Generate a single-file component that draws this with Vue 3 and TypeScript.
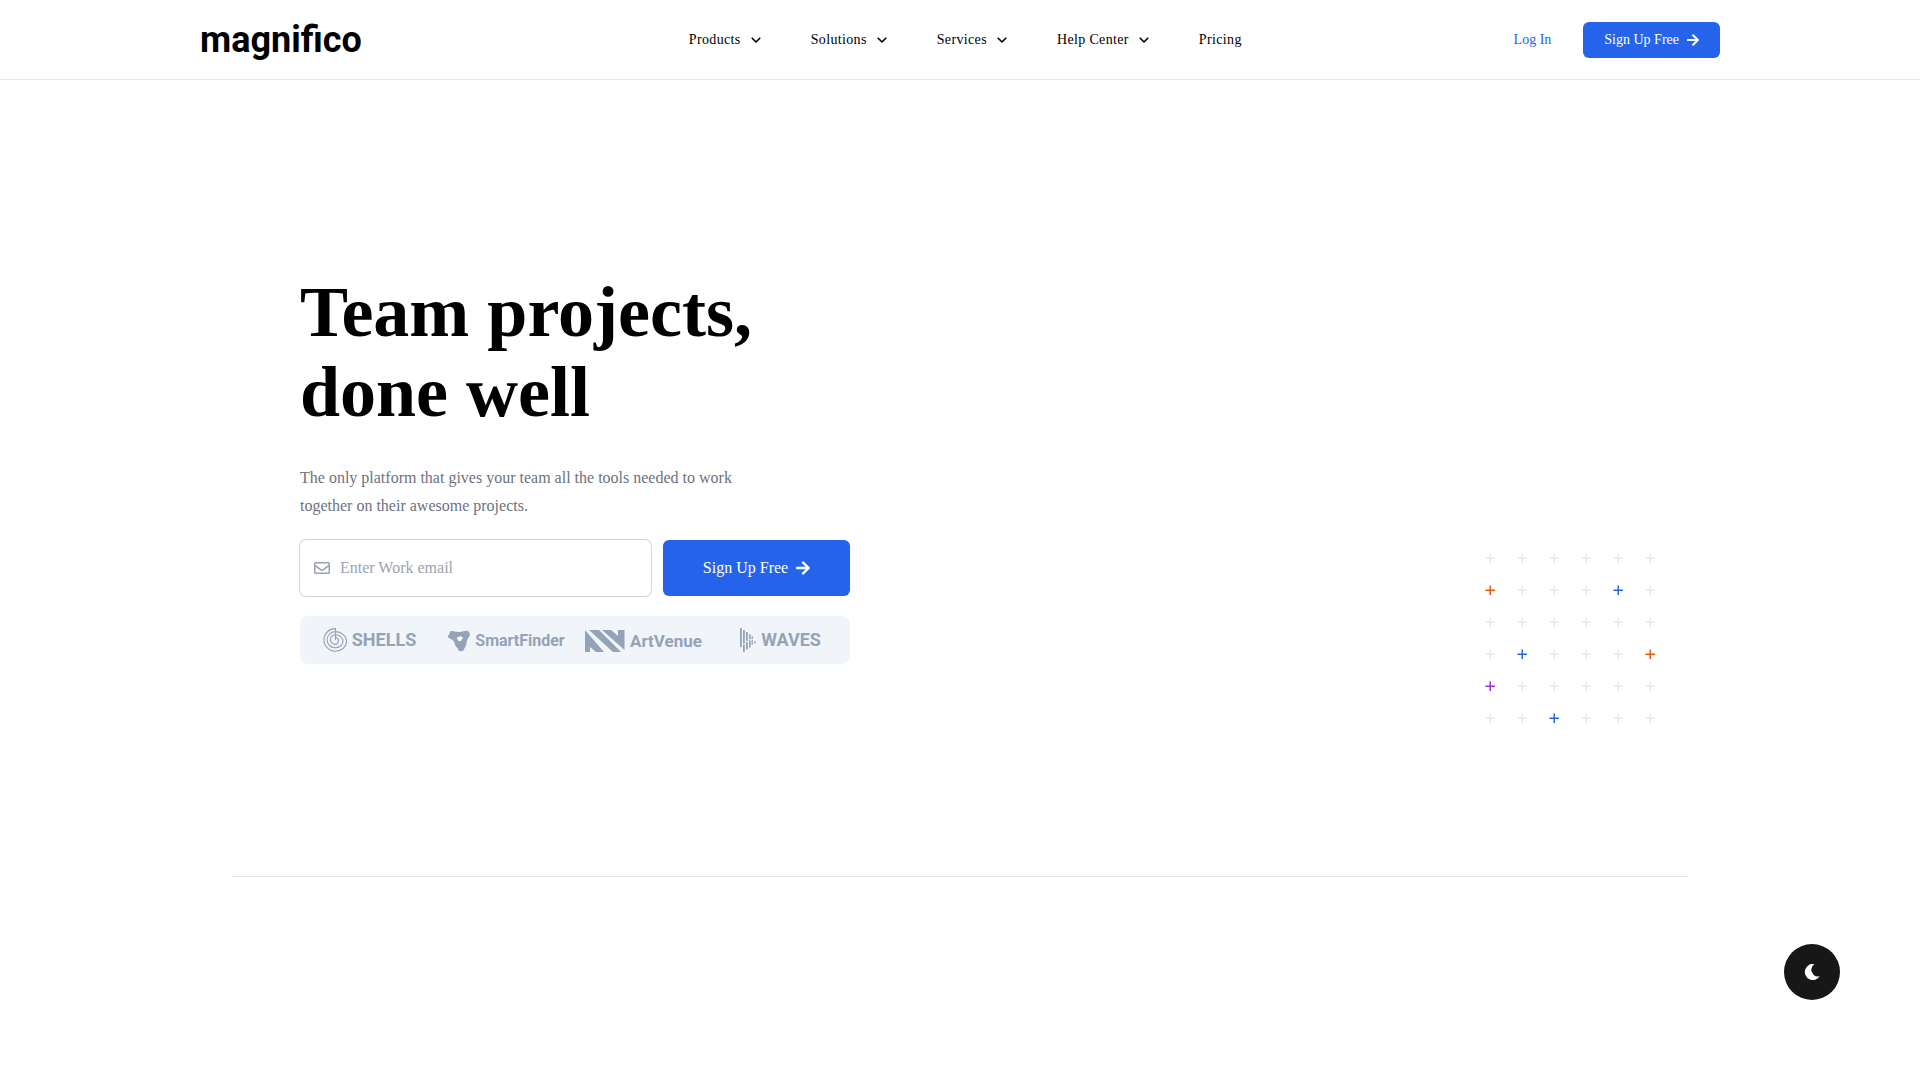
<script setup lang="ts">
import { ref } from 'vue'

interface NavItem {
  label: string
  menu: boolean
}

const navItems: NavItem[] = [
  { label: 'Products', menu: true },
  { label: 'Solutions', menu: true },
  { label: 'Services', menu: true },
  { label: 'Help Center', menu: true },
  { label: 'Pricing', menu: false },
]

const email = ref('')

// Accent colours by cell index in the 6 × 6 plus pattern
const accents: Record<number, string> = {
  6: 'orange',
  10: 'blue',
  19: 'blue',
  23: 'orange',
  24: 'purple',
  32: 'blue',
}
const cells: string[] = Array.from({ length: 36 }, (_, i) => accents[i] ?? 'plain')

const arrowPath =
  'M190.5 66.9l22.2-22.2c9.4-9.4 24.6-9.4 33.9 0L441 239c9.4 9.4 9.4 24.6 0 33.9L246.6 467.3c-9.4 9.4-24.6 9.4-33.9 0l-22.2-22.2c-9.5-9.5-9.3-25 .4-34.3L311.4 296H24c-13.3 0-24-10.7-24-24v-32c0-13.3 10.7-24 24-24h287.4L190.9 101.2c-9.8-9.3-10-24.8-.4-34.3z'
</script>

<template>
  <div class="page">
    <header class="header">
      <div class="header-inner">
        <a href="#" class="brand">magnifico</a>
        <nav class="nav" aria-label="Main">
          <template v-for="item in navItems" :key="item.label">
            <button v-if="item.menu" type="button" class="nav-item">
              {{ item.label }}
              <svg class="chevron" viewBox="0 0 18 18" fill="none" stroke="currentColor" stroke-width="1.6" stroke-linecap="round" stroke-linejoin="round" aria-hidden="true">
                <path d="M5.200 7.200L9 11L12.800 7.200" />
              </svg>
            </button>
            <a v-else href="#" class="nav-item">{{ item.label }}</a>
          </template>
        </nav>
        <div class="actions">
          <a href="#" class="login">Log In</a>
          <button type="button" class="btn btn-small">
            Sign Up Free
            <svg viewBox="0 0 448 512" fill="currentColor" aria-hidden="true">
              <path :d="arrowPath" />
            </svg>
          </button>
        </div>
      </div>
    </header>

    <main class="hero">
      <section class="intro">
        <h1>Team projects,<br />done well</h1>
        <p>The only platform that gives your team all the tools needed to work together on their awesome projects.</p>
        <form class="signup" @submit.prevent>
          <label class="field">
            <svg viewBox="0 0 512 512" fill="currentColor" aria-hidden="true">
              <path d="M464 64H48C21.49 64 0 85.49 0 112v288c0 26.51 21.49 48 48 48h416c26.51 0 48-21.49 48-48V112c0-26.51-21.49-48-48-48zm0 48v40.805c-22.422 18.259-58.168 46.651-134.587 106.49-16.841 13.247-50.201 45.072-73.413 44.701-23.208.375-56.579-31.459-73.413-44.701C106.18 199.465 70.425 171.067 48 152.805V112h416zM48 400V214.398c22.914 18.251 55.409 43.862 104.938 82.646 21.857 17.205 60.134 55.186 103.062 54.955 42.717.231 80.509-37.199 103.053-54.947 49.528-38.783 82.032-64.401 104.947-82.653V400H48z" />
            </svg>
            <input v-model="email" type="email" placeholder="Enter Work email" aria-label="Work email" />
          </label>
          <button type="submit" class="btn btn-large">
            Sign Up Free
            <svg viewBox="0 0 448 512" fill="currentColor" aria-hidden="true">
              <path :d="arrowPath" />
            </svg>
          </button>
        </form>
        <div class="clients">
          <div class="client">
            <svg width="24" height="24" viewBox="0 0 24 24" fill="none" stroke="currentColor" stroke-width="1.1" aria-hidden="true">
              <path d="M12.500 12V.6A11.300 11.300 0 0 0 12 23.200A11.300 9.800 0 0 0 12.500 3.600A8.100 8.100 0 0 0 12 19.800A7.700 6.500 0 0 0 12.500 6.800A4.800 4.800 0 0 0 12 16.400A4 3.700 0 0 0 12.500 9.200" />
            </svg>
            <span class="client-name">SHELLS</span>
          </div>
          <div class="client lowered">
            <svg width="22" height="22" viewBox="0 0 22 22" fill="currentColor" aria-hidden="true">
              <path d="M2.5 1.2C5 .2 6.300 2 11 1.900C15.500 1.800 16.500 .2 19.500 .8C22.300 2 22.600 5.500 20.400 7.800C18.300 10.500 19 12 18.200 14.500C17.400 17 16.600 17.500 16 19.500C15.300 21.700 11 22 10.300 19.700C9.700 17.500 7.500 16.500 6.800 14C6.200 11.500 5.500 10 3.200 9.200C-.5 8 -.8 6 1 4.500C2 3.500 1.300 2.300 2.500 1.200Z" />
              <path class="shine" d="M9.500 7.200C8.700 7.800 9.100 8.800 10 10.300C10.700 11.500 12 11.700 13 10.700C14.400 9.200 15.200 8 14.300 7.100C13.200 6.400 11 6.500 9.500 7.200Z" />
            </svg>
            <span class="client-name medium">SmartFinder</span>
          </div>
          <div class="client lowered">
            <svg width="40" height="22" viewBox="0 0 40 22" fill="currentColor" aria-hidden="true">
              <path d="M0 0V22H5V17L11 22H19ZM4 0L28 22H36L14 0ZM17 0L39.500 20V0H33V6L26 0Z" />
            </svg>
            <span class="client-name compact">ArtVenue</span>
          </div>
          <div class="client">
            <svg width="16" height="24" viewBox="0 0 16 24" fill="currentColor" aria-hidden="true">
              <path d="M0 0h1.800v19H0zM3 2h1.800v13.500H3zM3 16.500h1.800V24H3zM6 4h1.800v9H6zM6 14h1.800v7.500H6zM9 6.300h1.600v5H9zM9 12.300h1.600v7.200H9zM11.500 8.200h1.400v3H11.500zM11.500 12.300h1.400v4.500H11.500zM14.200 13.500h1.600v2h-1.600z" />
            </svg>
            <span class="client-name">WAVES</span>
          </div>
        </div>
      </section>

      <div class="pattern" aria-hidden="true">
        <svg v-for="(tone, i) in cells" :key="i" :class="tone" viewBox="0 0 10 10" fill="currentColor">
          <path d="M4.500 .5H6V10H4.500ZM.5 4.500H10V6H.5Z" />
        </svg>
      </div>
    </main>

    <button type="button" class="theme" aria-label="Toggle dark mode">
      <svg width="16" height="16" viewBox="-1 0 16 16" fill="currentColor" aria-hidden="true">
        <path d="M9.500 0A8.100 8.100 0 1 0 14.800 12.300A6.800 6.800 0 0 1 9.500 0Z" />
      </svg>
    </button>
  </div>
</template>

<style>
body {
  background: #fff;
}
</style>

<style scoped>
.page {
  min-height: 100vh;
  color: #000;
  font-family: "Liberation Serif", serif;
  font-size: 16px;
}

.page *,
.page *::before {
  box-sizing: border-box;
}

button,
input {
  font: inherit;
  border: 0;
  margin: 0;
  padding: 0;
  background: none;
}

button {
  cursor: pointer;
}

a {
  color: inherit;
  text-decoration: none;
}

svg {
  flex: none;
  display: block;
}

.header {
  height: 80px;
  border-bottom: 1px solid #e5e7eb;
}

.header-inner {
  max-width: 1600px;
  height: 100%;
  margin: 0 auto;
  padding: 0 40px;
  display: flex;
  align-items: center;
  justify-content: space-between;
}

.brand {
  width: 217px;
  font-family: Roboto, sans-serif;
  font-size: 36px;
  font-weight: 700;
  line-height: 40px;
}

.nav {
  display: flex;
  align-items: center;
  gap: 46px;
}

.nav-item {
  display: flex;
  align-items: center;
  gap: 6px;
  font-size: 14px;
  line-height: 20px;
  letter-spacing: 0.025em;
  color: #000;
  white-space: nowrap;
}

.chevron {
  width: 18px;
  height: 18px;
}

.actions {
  display: flex;
  align-items: center;
  gap: 32px;
  font-size: 14px;
  line-height: 20px;
}

.login {
  color: #2563eb;
}

.btn {
  display: flex;
  align-items: center;
  justify-content: center;
  gap: 8px;
  border-radius: 6px;
  background: #2563eb;
  color: #fff;
  white-space: nowrap;
}

.btn-small {
  height: 36px;
  padding: 0 21px;
}

.btn-small svg {
  width: 12px;
  height: 14px;
}

.btn-large {
  flex: none;
  width: 187px;
  height: 56px;
}

.btn-large svg {
  width: 14px;
  height: 16px;
}

.hero {
  max-width: 1456px;
  margin: 0 auto;
  padding: 192px 33px 153px 68px;
  display: flex;
  align-items: flex-end;
  justify-content: space-between;
  gap: 32px;
  border-bottom: 1px solid #e5e7eb;
}

.intro {
  width: 550px;
  align-self: flex-start;
}

h1 {
  margin: 0 0 32px;
  font-size: 72px;
  line-height: 80px;
  font-weight: 700;
}

p {
  max-width: 448px;
  margin: 0 0 20px;
  line-height: 28px;
  color: #6b7280;
}

.signup {
  display: flex;
  gap: 12px;
  margin-bottom: 20px;
}

.field {
  flex: 1;
  height: 56px;
  padding: 0 14px;
  display: flex;
  align-items: center;
  gap: 10px;
  border-radius: 6px;
  box-shadow: 0 0 0 1px #d1d5db;
  color: #9ca3af;
}

.field svg {
  width: 16px;
  height: 16px;
}

.field input {
  flex: 1;
  min-width: 0;
  height: 40px;
  outline: none;
  color: #111827;
}

.field input::placeholder {
  color: #9ca3af;
  opacity: 1;
}

.clients {
  height: 48px;
  padding: 0 1px;
  display: grid;
  grid-template-columns: repeat(4, 1fr);
  align-items: center;
  border-radius: 8px;
  background: #f1f5f9;
  color: #94a3b8;
}

.client {
  display: flex;
  align-items: center;
  justify-content: center;
  gap: 5px;
}

.lowered {
  padding-top: 2px;
}

.client-name {
  font-family: Roboto, sans-serif;
  font-size: 18px;
  line-height: 24px;
  font-weight: 700;
}

.client-name.medium {
  font-size: 16px;
}

.client-name.compact {
  font-size: 17px;
}

.shine {
  fill: #fff;
}

.pattern {
  display: grid;
  grid-template-columns: repeat(6, 10px);
  gap: 22px;
  margin-top: 281px;
}

.pattern svg {
  width: 10px;
  height: 10px;
}

.plain {
  color: #e2e8f0;
}

.orange {
  color: #ea580c;
}

.blue {
  color: #2563eb;
}

.purple {
  color: #9333ea;
}

.theme {
  position: fixed;
  right: 80px;
  bottom: 80px;
  width: 56px;
  height: 56px;
  display: flex;
  align-items: center;
  justify-content: center;
  border-radius: 50%;
  background: #171717;
  color: #fff;
}
</style>
